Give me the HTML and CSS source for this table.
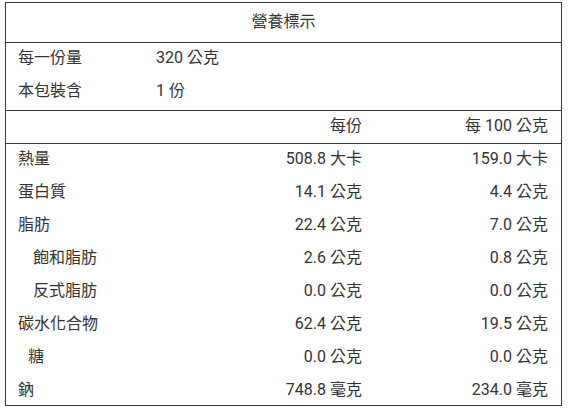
FILE: index.html
```html
<!DOCTYPE html>
<html lang="zh-Hant">
<head>
<meta charset="utf-8">
<title>營養標示</title>
<link rel="stylesheet" href="styles.css">
</head>
<body>
<div class="label">
  <div class="title">營養標示</div>
  <div class="info">
    <div class="info-row"><span>每一份量</span><span>320 公克</span></div>
    <div class="info-row"><span>本包裝含</span><span>1 份</span></div>
  </div>
  <div class="head-row">
    <span></span><span class="num">每份</span><span class="num">每 100 公克</span>
  </div>
  <div class="body">
    <div class="row"><span>熱量</span><span class="num">508.8 大卡</span><span class="num">159.0 大卡</span></div>
    <div class="row"><span>蛋白質</span><span class="num">14.1 公克</span><span class="num">4.4 公克</span></div>
    <div class="row"><span>脂肪</span><span class="num">22.4 公克</span><span class="num">7.0 公克</span></div>
    <div class="row"><span class="sub">飽和脂肪</span><span class="num">2.6 公克</span><span class="num">0.8 公克</span></div>
    <div class="row"><span class="sub">反式脂肪</span><span class="num">0.0 公克</span><span class="num">0.0 公克</span></div>
    <div class="row"><span>碳水化合物</span><span class="num">62.4 公克</span><span class="num">19.5 公克</span></div>
    <div class="row"><span class="sub-s">糖</span><span class="num">0.0 公克</span><span class="num">0.0 公克</span></div>
    <div class="row"><span>鈉</span><span class="num">748.8 毫克</span><span class="num">234.0 毫克</span></div>
  </div>
</div>
</body>
</html>
```
FILE: styles.css
```css
*, *::before, *::after {
  box-sizing: border-box;
}

html, body {
  margin: 0;
  padding: 0;
  background: #ffffff;
}

body {
  font-family: Roboto, "Noto Sans CJK TC", "Noto Sans", sans-serif;
  font-size: 16px;
  color: #333333;
}

.label {
  width: 557px;
  margin: 2px 0 0 5px;
  border: 1px solid #333d47;
  display: flex;
  flex-direction: column;
}

.title {
  height: 40px;
  padding-bottom: 5px;
  display: flex;
  align-items: center;
  justify-content: center;
  border-bottom: 1px solid #333d47;
}

.info {
  border-bottom: 1px solid #333d47;
  display: flex;
  flex-direction: column;
}

.info-row {
  height: 33.5px;
  padding: 0 0 8px 12px;
  display: grid;
  grid-template-columns: 138px 1fr;
  align-items: center;
}

.head-row,
.row {
  display: grid;
  grid-template-columns: 1fr 120px 186px;
  align-items: center;
}

.head-row {
  height: 33px;
  padding: 0 13px 6px 12px;
  border-bottom: 1px solid #333d47;
}

.body {
  display: flex;
  flex-direction: column;
}

.row {
  height: 33px;
  padding: 0 13px 7px 12px;
}

.row:last-child {
  height: 30px;
  padding-bottom: 4px;
}

.num {
  text-align: right;
  white-space: nowrap;
}

.sub {
  padding-left: 15px;
}

.sub-s {
  padding-left: 10px;
}
```
